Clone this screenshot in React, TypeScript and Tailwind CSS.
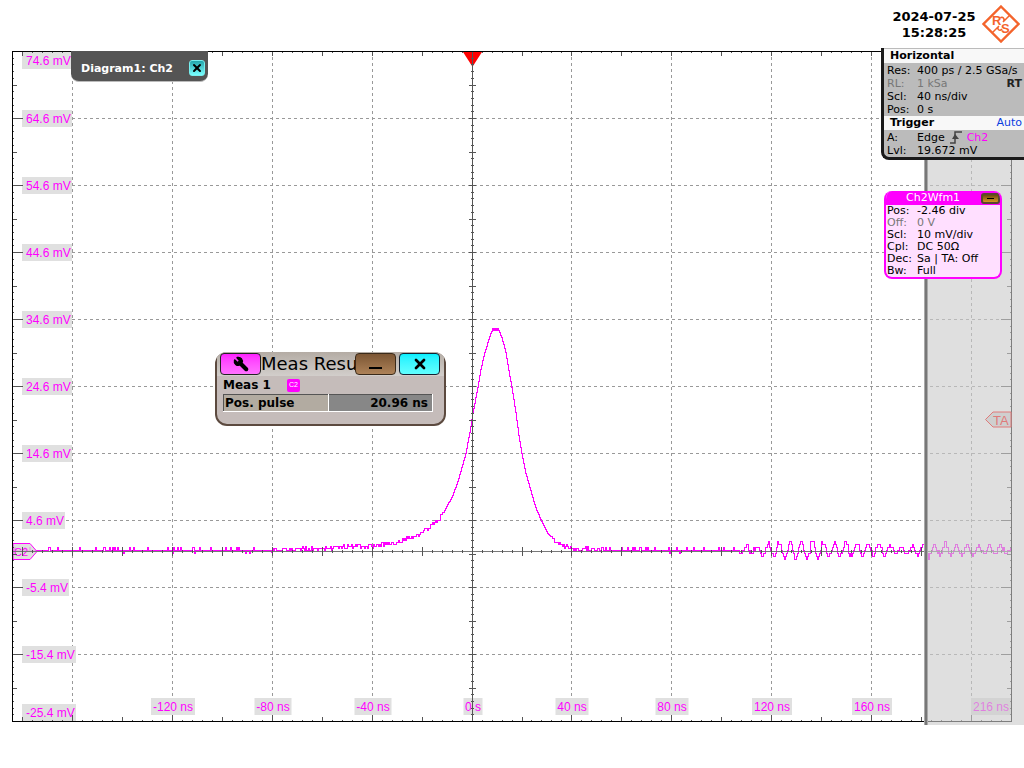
import type { ReactNode } from 'react'
import { Wrench, X } from 'lucide-react'

type Row = { label: string; value: ReactNode; dim?: boolean; extra?: string }

const PLOT = { left: 12, right: 1011, top: 51, bottom: 721, zeroX: 472, zeroY: 551 }

const GRID_X = [72, 172, 272, 372, 571, 671, 771, 871, 971]
const GRID_Y = [118, 185, 252, 319, 386, 453, 520, 587, 654]

const Y_LABELS = [
  { text: '74.6 mV', y: 52, w: 50 },
  { text: '64.6 mV', y: 110, w: 50 },
  { text: '54.6 mV', y: 177, w: 50 },
  { text: '44.6 mV', y: 244, w: 50 },
  { text: '34.6 mV', y: 311, w: 50 },
  { text: '24.6 mV', y: 378, w: 50 },
  { text: '14.6 mV', y: 445, w: 50 },
  { text: '4.6 mV', y: 512, w: 43 },
  { text: '-5.4 mV', y: 579, w: 47 },
  { text: '-15.4 mV', y: 646, w: 54 },
  { text: '-25.4 mV', y: 704, w: 54 },
]

const X_LABELS = [
  { text: '-120 ns', x: 173, w: 44 },
  { text: '-80 ns', x: 273, w: 37 },
  { text: '-40 ns', x: 373, w: 37 },
  { text: '0 s', x: 473, w: 19 },
  { text: '40 ns', x: 572, w: 33 },
  { text: '80 ns', x: 672, w: 33 },
  { text: '120 ns', x: 772, w: 40 },
  { text: '160 ns', x: 872, w: 40 },
  { text: '216 ns', x: 991, w: 40 },
]

// pulse shape, [x, y] in plot units
const PULSE: [number, number][] = [
  [12, 550], [270, 550], [340, 547], [353, 546], [373, 545], [388, 543], [396, 542], [407, 538],
  [420, 533], [430, 526], [438, 519], [445, 508], [452, 495], [457, 481], [462, 464], [465, 453],
  [469, 432], [472, 413], [477, 387], [480, 369], [484, 352], [489, 336], [491, 331], [492, 330],
  [498, 330], [501, 337], [505, 352], [508, 370], [511, 387], [515, 412], [518, 435], [521, 453],
  [525, 473], [529, 487], [533, 501], [536, 510], [541, 521], [547, 533], [553, 539], [558, 543],
  [563, 546], [573, 548], [590, 549], [607, 550], [1011, 550],
]

// envelope of the ringing at the end of the record
const RINGING: [number, number][] = [
  [725, 0], [745, 3], [767, 6], [789, 9], [800, 9], [834, 7], [870, 6], [900, 4], [925, 5], [940, 5],
  [965, 5], [1011, 2],
]

function interp(points: [number, number][], x: number) {
  if (x <= points[0][0]) return points[0][1]
  for (let i = 1; i < points.length; i++) {
    const [x1, y1] = points[i]
    const [x0, y0] = points[i - 1]
    if (x <= x1) return y0 + ((y1 - y0) * (x - x0)) / (x1 - x0)
  }
  return points[points.length - 1][1]
}

function noise(n: number) {
  const v = Math.sin(n * 127.1 + 11.7) * 43758.5453
  return v - Math.floor(v)
}

function tracePath() {
  let d = ''
  for (let x = PLOT.left; x < PLOT.right; x++) {
    const amp = interp(RINGING, x)
    let y = interp(PULSE, x)
    const r = noise(x)
    const pulse = x > 445 && x < 550
    if (!pulse && x > 270 && x < 600) y += (r - 0.5) * 4
    else if (!pulse && r > 0.85) y -= 3
    else if (!pulse && r < 0.02) y += 3
    if (amp > 0) y -= amp * Math.cos(((x - 767.3) / 11.07) * 2 * Math.PI)
    const step = pulse ? 1 : x > 270 && x < 600 ? 2 : 3
    const q = 550 - Math.round((550 - y) / step) * step + 0.5
    d += d ? `V${q}H${x + 1}` : `M${x} ${q}H${x + 1}`
  }
  return d
}

function tickPath() {
  let d = ''
  for (let i = 0; i < 100; i++) {
    const x = Math.round(22 + i * 9.99) + 0.5
    if (x > PLOT.right) break
    const long = i % 5 === 0
    const mid = long ? 4 : 1
    d += `M${x} ${PLOT.bottom}v${long ? (i % 10 === 5 ? -6 : -4) : -1}`
    d += `M${x} ${PLOT.top + 1}v${long ? 4 : 1}`
    d += `M${x} ${PLOT.zeroY - mid}v${mid * 2 + 1}`
  }
  for (let i = 0; i < 100; i++) {
    const y = Math.round(51 + i * 6.7) + 0.5
    if (y > PLOT.bottom) break
    const edge = i % 10 === 0 ? 10 : i % 5 === 0 ? 4 : 1
    const mid = i % 5 === 0 ? 3 : 1
    d += `M${PLOT.left + 1} ${y}h${edge}`
    d += `M${PLOT.right} ${y}h${-edge}`
    d += `M${PLOT.zeroX - mid} ${y}h${mid * 2 + 1}`
  }
  return d
}

function Plot() {
  return (
    <svg viewBox="0 48 1024 678" className="block h-auto w-full" role="img" aria-label="Ch2 waveform">
      <g stroke="#999" strokeDasharray="3 3" fill="none" shapeRendering="crispEdges">
        {GRID_X.map((x) => (
          <path key={x} d={`M${x + 0.5} ${PLOT.top}V${PLOT.bottom}`} />
        ))}
        {GRID_Y.map((y) => (
          <path key={y} d={`M${PLOT.left} ${y + 0.5}H${PLOT.right}`} />
        ))}
      </g>

      <g className="font-['Liberation_Sans',sans-serif] text-[12px]" fill="#f0f">
        {Y_LABELS.map((l) => (
          <g key={l.text}>
            <rect x="22" y={l.y} width={l.w} height="17" fill="#e0e0e0" />
            <text x="26" y={l.y + 13}>{l.text}</text>
          </g>
        ))}
        {X_LABELS.map((l) => (
          <g key={l.text}>
            <rect x={l.x - l.w / 2} y="698" width={l.w} height="17" fill="#e0e0e0" />
            <text x={l.x} y="711" textAnchor="middle">{l.text}</text>
          </g>
        ))}
      </g>

      <path d={tracePath()} stroke="#f0f" fill="none" shapeRendering="crispEdges" />
      <path d="M492 329.5H499" stroke="#f0f" strokeWidth="3" />

      {/* channel offset marker */}
      <path d="M13 543.5H30L37 551.5L30 559.5H13Z" fill="#d9d9d9" fillOpacity="0.85" stroke="#f0f" />
      <text x="14" y="556" fill="#f0f" className="font-['Liberation_Sans',sans-serif] text-[11px]">C2</text>

      {/* trigger position */}
      <path d="M463 52H482L473 66H472Z" fill="#f00" />

      <g stroke="#555" fill="none" shapeRendering="crispEdges">
        <path d={`M${PLOT.left} ${PLOT.zeroY + 0.5}H${PLOT.right}`} stroke="#777" />
        <path d={`M${PLOT.zeroX + 0.5} ${PLOT.top}V${PLOT.bottom}`} />
        <path d={tickPath()} />
      </g>
      <rect x="12.5" y="51.5" width="999" height="670" fill="none" stroke="#000" shapeRendering="crispEdges" />

      {/* side bar area laid over the diagram */}
      <rect x="925" y="48" width="99" height="677" fill="#cbcbcb" fillOpacity="0.62" />
      <rect x="924" y="48" width="4" height="677" fill="#aaa" />
      <rect x="925" y="48" width="2" height="677" fill="#777" />

      <path d="M985.5 419.5L993 412H1011V427H993Z" fill="#cfcfcf" stroke="#e07a7a" />
      <text x="993" y="425" fill="#e07a7a" className="font-['Liberation_Sans',sans-serif] text-[13px]">TA</text>
    </svg>
  )
}

function Logo() {
  return (
    <svg viewBox="0 0 38 38" className="size-[38px]" role="img" aria-label="R&S">
      <path d="M19 1.5L36.5 19L19 36.5L1.5 19Z" fill="none" stroke="#f4642c" strokeWidth="2.4" />
      <path d="M10.5 27.5L17 21M21 17L27.5 10.5M17 21C14 24 18 27 20 24M21 17C24 14 20 11 18.5 13" fill="none" stroke="#f4642c" strokeWidth="1.5" />
      <g fill="#f4642c" className="font-['Liberation_Sans',sans-serif] text-[13px] font-bold">
        <text x="10" y="20">R</text>
        <text x="19" y="28">S</text>
      </g>
    </svg>
  )
}

function Rows({ rows }: { rows: Row[] }) {
  return (
    <dl>
      {rows.map((r) => (
        <div key={r.label} className={r.dim ? 'flex text-[#777]' : 'flex'}>
          <dt className="w-[30px] shrink-0">{r.label}</dt>
          <dd className="flex flex-1 whitespace-nowrap">
            {r.value}
            {r.extra && <b className="ml-auto pr-[2px] text-[#222]">{r.extra}</b>}
          </dd>
        </div>
      ))}
    </dl>
  )
}

const HORIZONTAL: Row[] = [
  { label: 'Res:', value: '400 ps / 2.5 GSa/s' },
  { label: 'RL:', value: '1 kSa', dim: true, extra: 'RT' },
  { label: 'Scl:', value: '40 ns/div' },
  { label: 'Pos:', value: '0 s' },
]

const TRIGGER: Row[] = [
  {
    label: 'A:',
    value: (
      <>
        Edge
        <svg viewBox="0 0 12 13" className="mx-[5px] h-[13px] w-3" fill="none" stroke="#444" strokeWidth="1.5">
          <path d="M0 12H5V1H12" />
          <path d="M2 8L5 3L9 8Z" fill="#444" stroke="none" />
        </svg>
        <span className="text-[#f0f]">Ch2</span>
      </>
    ),
  },
  { label: 'Lvl:', value: '19.672 mV' },
]

const CHANNEL: Row[] = [
  { label: 'Pos:', value: '-2.46 div' },
  { label: 'Off:', value: '0 V', dim: true },
  { label: 'Scl:', value: '10 mV/div' },
  { label: 'Cpl:', value: 'DC 50Ω' },
  { label: 'Dec:', value: 'Sa | TA: Off' },
  { label: 'Bw:', value: 'Full' },
]

function SettingsPanel() {
  return (
    <section className="w-[143px] overflow-hidden rounded-bl-lg border-b-[3px] border-l-[3px] border-[#1a1a1a] bg-[#bbb] pt-px text-[11px] leading-[13px]">
      <h2 className="h-[14px] bg-[#f8f8f8] pl-[6px] font-bold leading-[14px]">Horizontal</h2>
      <div className="pt-px pl-[3px]">
        <Rows rows={HORIZONTAL} />
      </div>
      <h2 className="flex h-[14px] justify-between bg-[#f8f8f8] pr-[2px] pl-[6px] font-bold leading-[14px]">
        Trigger
        <span className="font-normal text-[#0a3ce0]">Auto</span>
      </h2>
      <div className="pt-px pl-[3px]">
        <Rows rows={TRIGGER} />
      </div>
    </section>
  )
}

function ChannelPanel() {
  return (
    <section className="mr-[22px] w-[118px] overflow-hidden rounded-lg border-2 border-t-0 border-[#f0f] bg-[#ffdfff] text-[11px] leading-[12px]">
      <header className="flex h-[14px] items-center bg-[#f0f] text-white">
        <h2 className="flex-1 pl-5">Ch2Wfm1</h2>
        <button
          type="button"
          aria-label="Minimize"
          className="flex h-[11px] w-[19px] items-center justify-center rounded-[3px] border-2 border-[#5a4630] bg-linear-to-b from-[#6b4a10] to-[#d89a20]"
        >
          <span className="h-px w-[7px] bg-black" />
        </button>
      </header>
      <div className="pl-px">
        <Rows rows={CHANNEL} />
      </div>
    </section>
  )
}

function MeasDialog() {
  const button = 'flex h-[22px] w-[41px] shrink-0 items-center justify-center rounded-[4px] border text-black'
  return (
    <section
      role="dialog"
      aria-label="Meas Results"
      className="absolute top-[304px] left-[215px] h-[74px] w-[231px] overflow-hidden rounded-xl bg-[#5c4a3f] px-[2px] pb-[2px]"
    >
      <div className="h-full overflow-hidden rounded-b-[10px] bg-[#c5bcba]">
        <header className="flex h-6 items-center gap-[3px] bg-linear-to-b from-[#b4aca4] to-[#d2cecb] pr-1 pl-[3px]">
          <div className="flex min-w-0 flex-1">
            <button
              type="button"
              aria-label="Settings"
              className={`${button} border-[#222] bg-linear-to-b from-[#ff20ff] to-[#ff70ff]`}
            >
              <Wrench className="size-4 -scale-x-100 fill-black" />
            </button>
            <h2 className="min-w-0 flex-1 overflow-hidden text-[18px] leading-[22px] whitespace-nowrap">Meas Results</h2>
            <button
              type="button"
              aria-label="Minimize"
              className={`${button} border-[#3a2a1a] bg-linear-to-b from-[#7c5634] to-[#ad8258]`}
            >
              <span className="mt-2 h-[2px] w-[13px] bg-black" />
            </button>
          </div>
          <button
            type="button"
            aria-label="Close"
            className={`${button} border-[#123] bg-linear-to-b from-[#00f0ff] to-[#60ffff]`}
          >
            <X className="size-4" strokeWidth={4} />
          </button>
        </header>
        <div className="pl-[6px] text-[12px] font-bold leading-[16px]">
          <div className="flex h-[18px] items-center">
            <span className="w-16">Meas 1</span>
            <span className="flex size-[13px] items-center justify-center rounded-[2px] bg-[#f0f] font-['Liberation_Sans',sans-serif] text-[7px] font-normal text-white">
              C2
            </span>
          </div>
          <table className="h-[18px] w-[210px] border-collapse border border-white border-t-[#555] border-l-[#555]">
            <tbody>
              <tr>
                <th scope="row" className="w-[105px] border-r border-white bg-[#b2aba1] p-0 pl-px text-left leading-[16px]">
                  Pos. pulse
                </th>
                <td className="bg-[#878787] p-0 pr-1 text-right leading-[16px]">20.96 ns</td>
              </tr>
            </tbody>
          </table>
        </div>
      </div>
    </section>
  )
}

export default function App() {
  return (
    <main className="min-h-screen overflow-x-hidden bg-white font-['DejaVu_Sans',sans-serif] text-black">
      <header className="flex h-12 items-center justify-end gap-1 pr-1">
        <time dateTime="2024-07-25T15:28:25" className="w-[88px] pt-[2px] text-center text-[13px] font-bold leading-[16px]">
          2024-07-25 15:28:25
        </time>
        <Logo />
      </header>

      <div className="relative">
        <Plot />

        <div className="absolute top-[3px] left-[71px] flex h-[31px] items-center gap-4 rounded-b-lg border-b border-[#bbb] bg-[#545454] pt-[4px] pr-[3px] pl-[10px]">
          <h1 className="pt-px text-[11px] leading-4 font-bold text-white">Diagram1: Ch2</h1>
          <button
            type="button"
            aria-label="Close diagram"
            className="flex size-4 items-center justify-center rounded-[3px] border border-[#7ee] bg-linear-to-b from-[#1fa5ab] to-[#7ff]"
          >
            <X className="size-3 text-black" strokeWidth={4} />
          </button>
        </div>

        <MeasDialog />

        <aside className="absolute top-0 right-0 flex flex-col items-end gap-[31px]">
          <SettingsPanel />
          <ChannelPanel />
        </aside>
      </div>
    </main>
  )
}
